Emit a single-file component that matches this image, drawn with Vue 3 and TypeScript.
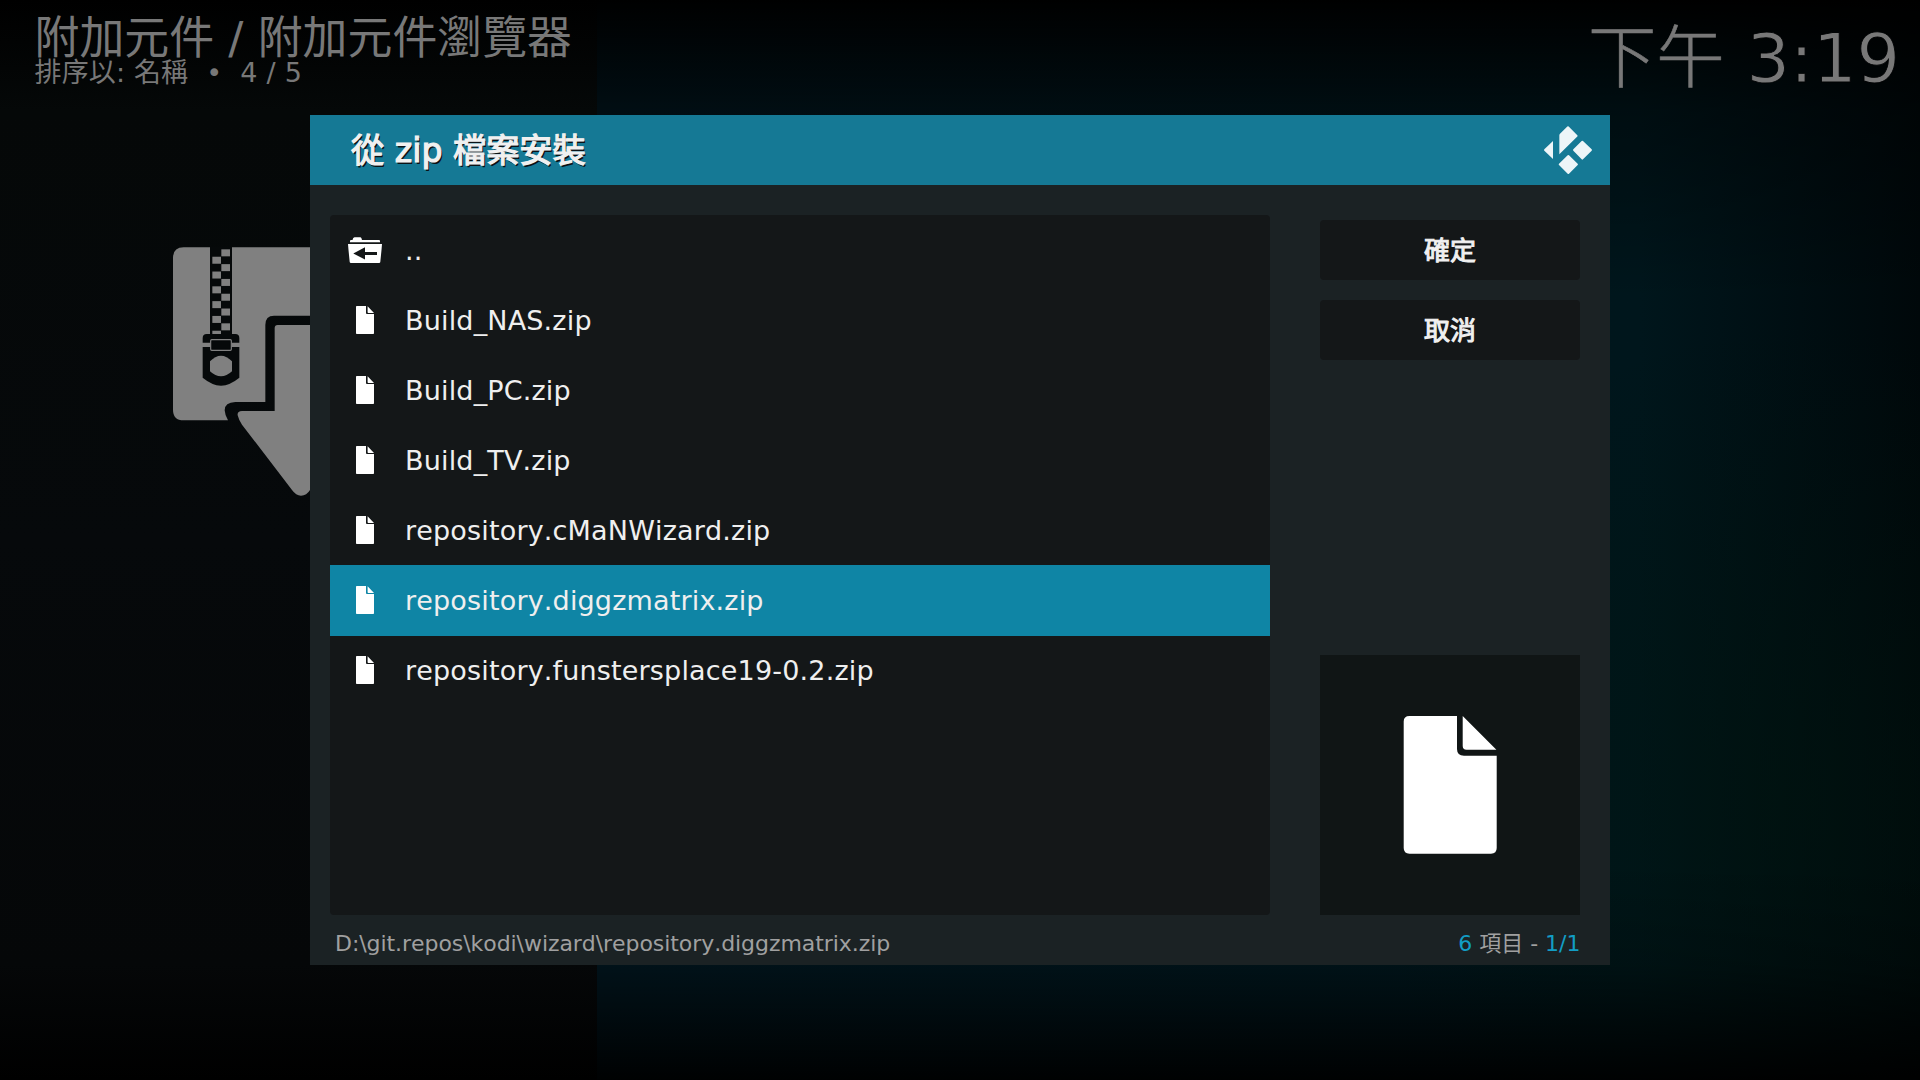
<script setup lang="ts">
interface Entry {
  name: string
  kind: 'up' | 'file'
}

const entries: Entry[] = [
  { name: '..', kind: 'up' },
  { name: 'Build_NAS.zip', kind: 'file' },
  { name: 'Build_PC.zip', kind: 'file' },
  { name: 'Build_TV.zip', kind: 'file' },
  { name: 'repository.cMaNWizard.zip', kind: 'file' },
  { name: 'repository.diggzmatrix.zip', kind: 'file' },
  { name: 'repository.funstersplace19-0.2.zip', kind: 'file' },
]
const selected = 5
const buttons: string[] = ['確定', '取消']
const path = 'D:\\git.repos\\kodi\\wizard\\repository.diggzmatrix.zip'

// zipper teeth, alternating between the two columns
const teeth = Array.from({ length: 12 }, (_, i) => ({
  x: i % 2 ? 187 : 214,
  y: 58 + i * 22.2,
  h: i === 11 ? 10 : 21,
}))
</script>

<template>
  <div class="screen">
    <div class="side"></div>

    <header class="top">
      <div class="crumbs">
        <div class="title">附加元件 / 附加元件瀏覽器</div>
        <div class="sort">
          <span class="by">排序以: 名稱</span><span class="dot">•</span><span class="count">4 / 5</span>
        </div>
      </div>
      <div class="clock"><span class="period">下午</span> <span class="time">3:19</span></div>
    </header>

    <svg class="zip" viewBox="0 0 480 840">
      <path
        fill="#808080"
        d="M101 52H480V257H372Q346 257 346 285V516H256Q224 517 224 541Q225 557 234 571H101Q69 571 69 539V84Q69 52 101 52Z"
      />
      <rect x="180" y="50" width="66" height="264" fill="#06090a" />
      <rect v-for="t in teeth" :key="t.y" :x="t.x" :y="t.y" width="26" :height="t.h" fill="#808080" />
      <path fill="#06090a" d="M158 338V324Q158 312 170 312H256Q268 312 268 324V338Z" />
      <path fill="#06090a" d="M158 351H268V443Q240 466 213 467Q186 466 158 443Z" />
      <rect x="182" y="329" width="62" height="32" rx="3" fill="#06090a" stroke="#808080" stroke-width="3.5" />
      <rect x="187" y="334" width="52" height="22" rx="5" fill="#06090a" />
      <path fill="#808080" d="M180 394Q196 377 213 377Q230 377 246 394V424Q230 439 213 439Q196 439 180 424Z" />
      <path
        fill="#808080"
        d="M480 285H383Q374 285 374 294V543H276Q261 544 263 556Q266 569 276 584L426 780Q438 797 453 797Q470 797 480 780Z"
      />
    </svg>

    <section class="dialog">
      <div class="head">
        <h1>從 zip 檔案安裝</h1>
        <svg class="logo" width="48" height="48" viewBox="0 0 144 144">
          <g fill="#edf5f8">
            <path d="M70 1.500Q72 -.5 74 1.500L100 27.500Q102 29.500 100 31.500L46 85V28Q46 25.500 48 23.500Z" />
            <path d="M27 45V99L1 74Q-1 72 1 70Z" />
            <path d="M113 45Q115 43 117 45L143 70Q145 72 143 74L117 100Q115 102 113 100L88 74Q86 72 88 70Z" />
            <path d="M71 88Q73 86 75 88L101 113Q103 115 101 117L75 143Q73 145 71 143L45 117Q43 115 45 113Z" />
          </g>
        </svg>
      </div>

      <div class="body">
        <ul class="list">
          <li v-for="(e, i) in entries" :key="e.name" :class="{ on: i === selected }">
            <span class="ico">
              <svg v-if="e.kind === 'up'" width="34" height="26" viewBox="0 0 34 26">
                <path fill="#fff" d="M2 5.200V4Q2 3 3 3H4.500Q5 .300 6.500 .300H12.500Q13.500 .300 14 3H31Q32 3 32 4V5.200Z" />
                <path
                  fill="#fff"
                  fill-rule="evenodd"
                  d="M0 7H34L33.500 13L32.300 25Q32.200 26 31 26H3Q1.800 26 1.700 25L.500 13ZM5.300 16.500L17 22.500V18H29V15H17V10.300Z"
                />
              </svg>
              <svg v-else width="18" height="28" viewBox="0 0 18 28">
                <path fill="#fff" d="M.8 0H10V7Q10 8 11 8H18V27.200Q18 28 17.200 28H.8Q0 28 0 27.200V.8Q0 0 .8 0ZM11.600 .300L18 7H12.300Q11.600 7 11.600 6.300Z" />
              </svg>
            </span>
            <span class="name">{{ e.name }}</span>
          </li>
        </ul>

        <aside class="actions">
          <button v-for="b in buttons" :key="b" type="button">{{ b }}</button>
          <div class="preview">
            <svg width="260" height="260" viewBox="0 0 260 260">
              <path
                fill="#fff"
                d="M89.500 61H137V94Q137 100.700 144 100.700H176.700V193Q176.700 198.700 171 198.700H89.500Q83.700 198.700 83.700 193V66.500Q83.700 61 89.500 61ZM142.700 61L176.400 94.700H146.500Q142.700 94.700 142.700 91Z"
              />
            </svg>
          </div>
        </aside>
      </div>

      <footer class="foot">
        <span class="path">{{ path }}</span>
        <span><b>6</b> 項目 - <b>1/1</b></span>
      </footer>
    </section>
  </div>
</template>

<style>
body {
  background: #000;
}
</style>

<style scoped>
.screen {
  position: relative;
  box-sizing: border-box;
  width: 1920px;
  height: 1080px;
  overflow: hidden;
  font-family: 'DejaVu Sans', 'Noto Sans CJK TC', sans-serif;
  font-kerning: none;
  background:
    linear-gradient(180deg, #000 0, rgba(0, 0, 0, 0.4) 110px, transparent 300px, transparent 860px, rgba(0, 0, 0, 0.2) 965px, rgba(0, 0, 0, 0.94) 1080px),
    radial-gradient(420px 480px at 1780px 800px, rgba(0, 20, 14, 0.6), transparent),
    linear-gradient(90deg, #01161f 597px, #00161c 1640px, #000a0d 1880px, #00080a 1920px);
}
.side {
  position: absolute;
  inset: 0 auto 0 0;
  width: 597px;
  background: linear-gradient(180deg, #000 0, #050808 110px, #06090b 540px, #050708 965px, #000 1080px);
}
.top {
  position: relative;
  display: flex;
  justify-content: space-between;
  height: 115px;
  padding: 0 20px 0 34.500px;
  color: #787878;
}
.title {
  font-size: 44.900px;
  line-height: 45px;
  margin-top: 16px;
}
.sort {
  font-size: 27px;
  line-height: 30px;
  margin-top: -3px;
  white-space: pre;
}
.by {
  letter-spacing: 0.150px;
}
.dot {
  margin: 0 18px 0 18px;
}
.count {
  letter-spacing: 0.300px;
}
.clock {
  font-size: 68.400px;
  line-height: 80px;
  margin-top: 19px;
}
.period {
  font-family: 'Noto Sans CJK TC', sans-serif;
  font-weight: 300;
  line-height: 0;
  -webkit-text-stroke: 0.600px #787878;
}
/* a dark outline slims the digits down to a light weight */
.time {
  -webkit-text-stroke: 0.900px #010304;
}
.zip {
  position: absolute;
  left: 150px;
  top: 230px;
  width: 160px;
  height: 280px;
}
.dialog {
  position: relative;
  display: flex;
  flex-direction: column;
  width: 1300px;
  height: 850px;
  margin: 0 auto;
  background: #1b2224;
}
.head {
  display: flex;
  align-items: center;
  justify-content: space-between;
  height: 70px;
  padding: 0 18px 0 41px;
  background: #157995;
}
.head h1 {
  margin: 0;
  padding-top: 2px;
  font-size: 33.200px;
  font-weight: 400;
  line-height: 70px;
  color: #f0f0f0;
  -webkit-text-stroke: 1.200px #f0f0f0;
  text-shadow: 1.500px 1.500px 0 #0a1216;
}
.logo {
  display: block;
  overflow: visible;
}
.body {
  display: flex;
  justify-content: space-between;
  padding: 30px 30px 0 20px;
}
.list {
  width: 940px;
  height: 700px;
  margin: 0;
  padding: 0;
  list-style: none;
  border-radius: 4px;
  background: #141718;
}
.list li {
  display: flex;
  align-items: center;
  height: 70px;
  font-size: 27px;
  line-height: 70px;
  color: #efefef;
}
.list li.on {
  background: #0f85a5;
  box-shadow: 0 1px 0 #0f85a5;
}
.ico {
  display: flex;
  justify-content: center;
  width: 70px;
  margin-right: 5px;
}
.name {
  padding-top: 2px;
  letter-spacing: 0.170px;
}
.actions {
  display: flex;
  flex-direction: column;
  gap: 20px;
  width: 260px;
  padding-top: 5px;
}
.actions button {
  height: 60px;
  padding: 3px 0 0;
  border: 0;
  border-radius: 4px;
  background: #141718;
  color: #f0f0f0;
  font-family: inherit;
  font-size: 26px;
  line-height: 57px;
  -webkit-text-stroke: 1px #f0f0f0;
}
.preview {
  height: 260px;
  margin-top: auto;
  background: #101515;
}
.preview svg {
  display: block;
}
.foot {
  display: flex;
  justify-content: space-between;
  padding: 1px 29.500px 0 25px;
  font-size: 22px;
  line-height: 56px;
  color: #a0a0a0;
}
.path {
  letter-spacing: -0.060px;
}
.foot b {
  font-weight: 400;
  color: #129dc4;
}
</style>
